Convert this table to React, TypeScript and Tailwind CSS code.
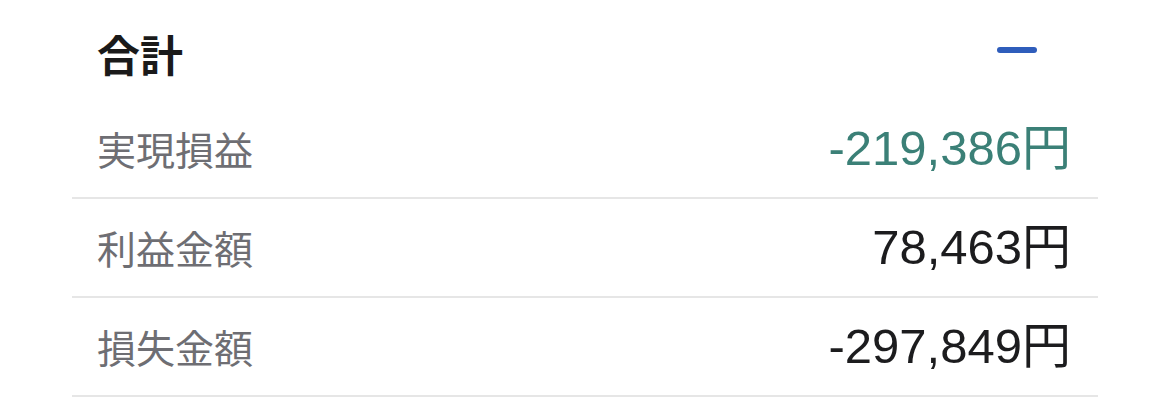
const ROWS = [
  { label: "実現損益", value: "-219,386円", tone: "text-[#3b8077]" },
  { label: "利益金額", value: "78,463円", tone: "text-[#1c1c1e]" },
  { label: "損失金額", value: "-297,849円", tone: "text-[#1c1c1e]" },
];

export default function App() {
  return (
    <div
      className="w-[1170px] h-[413px] bg-white px-[72px]"
      style={{ fontFamily: '"Liberation Sans", "Noto Sans CJK JP", sans-serif' }}
    >
      <div className="h-[100px] flex items-center justify-between pl-[25px] pr-[61px]">
        <h2 className="text-[43px] font-bold text-[#1a1a1a] pt-[6px]" style={{ fontFamily: '"Noto Sans CJK JP", sans-serif' }}>
          合計
        </h2>
        <span className="block w-[40px] h-[6px] rounded-full bg-[#2f5dbb]" />
      </div>

      {ROWS.map((r) => (
        <div
          key={r.label}
          className="h-[99px] flex items-center justify-between pl-[25px] pr-[27px] border-b-2 border-[#e6e6e6]"
        >
          <span className="text-[39px] text-[#6e6e73]" style={{ fontFamily: '"Noto Sans CJK JP", sans-serif' }}>
            {r.label}
          </span>
          <span className={`text-[49px] ${r.tone}`}>{r.value}</span>
        </div>
      ))}
    </div>
  );
}
